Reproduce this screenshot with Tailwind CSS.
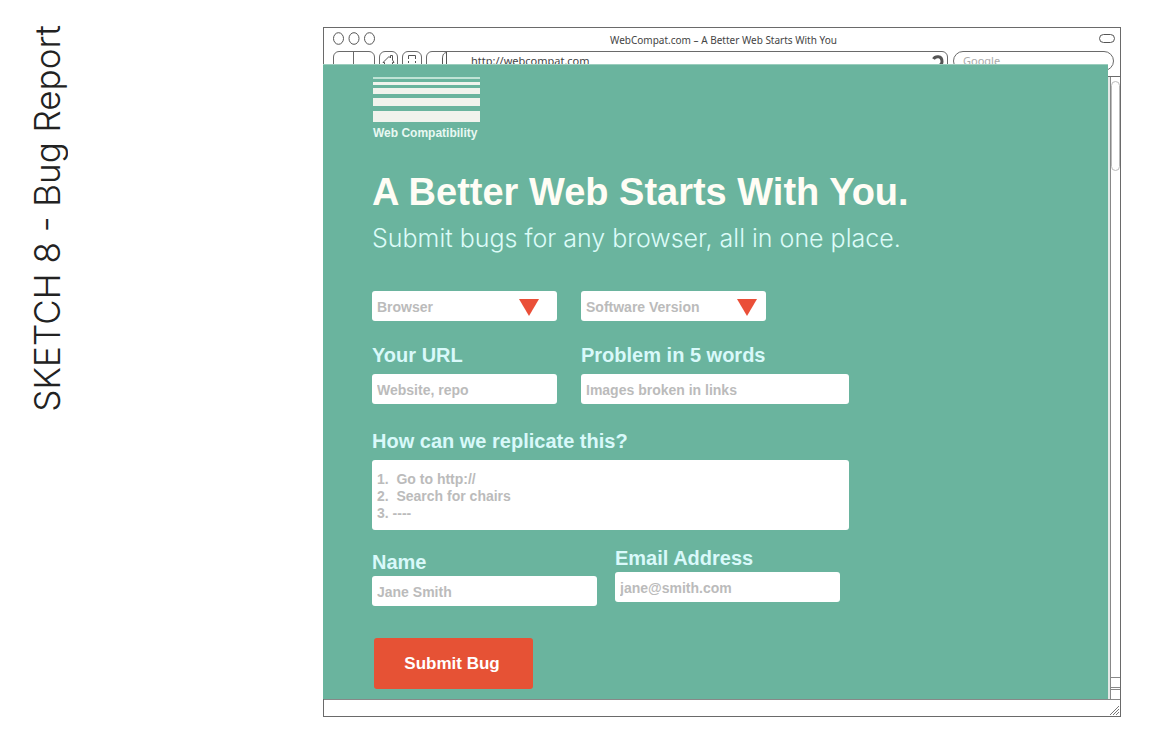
<!DOCTYPE html>
<html lang="en">
<head>
<meta charset="utf-8">
<title>WebCompat.com – A Better Web Starts With You</title>
<script src="https://cdn.jsdelivr.net/npm/@tailwindcss/browser@4"></script>
</head>
<body class="bg-white font-['Liberation_Sans',Arial,sans-serif]">
<div class="flex items-start">
  <aside class="w-[323px] shrink-0 pt-[25px] pl-[23px]">
    <p class="rotate-180 [writing-mode:vertical-rl] font-['Inter',sans-serif] text-[35px] leading-[48px] font-light whitespace-nowrap text-[#222]">SKETCH 8 - Bug Report</p>
  </aside>

  <main class="mt-[27px] mr-[29px] min-w-0 flex-1 border border-[#6a6a6a]">
    <!-- Browser chrome -->
    <header class="h-[49px] overflow-hidden border-b border-[#6a6a6a] font-['Noto_Sans',sans-serif] text-[#444]">
      <div class="flex h-[23px] items-center pr-[5px] pb-0.5 pl-[9px]">
        <svg class="h-[14px] w-[44px]" viewBox="0 0 44 14" fill="none" stroke="#555">
          <ellipse cx="5.500" cy="6.500" rx="5" ry="5.800"/><ellipse cx="21" cy="6.500" rx="5" ry="5.800"/><ellipse cx="36.500" cy="6.500" rx="5" ry="5.800"/>
        </svg>
        <h2 class="flex-1 pt-0.5 pr-[29px] text-center text-[10px] leading-4">WebCompat.com – A Better Web Starts With You</h2>
        <button type="button" aria-label="Toggle toolbar" class="h-[9px] w-4 rounded-full border border-[#555]"></button>
      </div>
      <div class="flex items-start pr-[6px] pl-[9px]">
        <div class="mr-1 grid h-[22px] w-[42px] grid-cols-2 rounded-md border border-[#6a6a6a]">
          <button type="button" aria-label="Back" class="border-r border-[#6a6a6a]"></button>
          <button type="button" aria-label="Forward"></button>
        </div>
        <button type="button" aria-label="Home" class="mr-1 flex h-[22px] w-[19px] justify-center rounded-md border border-[#6a6a6a] pt-[3px]">
          <svg class="h-[14px] w-[13px] shrink-0" viewBox="0 0 13 14" fill="none" stroke="#555"><path d="M1 7.500 7 1.500 8.500 3V.5H10.500V5L12 7.500H10.500V13H2.500V7.500Z"/></svg>
        </button>
        <button type="button" aria-label="Bookmarks" class="mr-1 flex h-[22px] w-5 justify-center rounded-md border border-[#6a6a6a] pt-[3px]">
          <svg class="h-[14px] w-[10px]" viewBox="0 0 10 14" fill="none" stroke="#555"><path d="M1.500 4V.5H8.500V4M1.500 6V8M8.500 6V8M1.500 10V13H8.500V10"/></svg>
        </button>
        <div class="flex h-[22px] min-w-0 flex-1 rounded-md border border-[#6a6a6a]">
          <svg class="h-5 w-5 shrink-0" viewBox="0 0 20 20" fill="none" stroke="#555"><path d="M19.500 0V20M19.500 .5C16 1 15.500 4 15.500 7V20"/></svg>
          <input aria-label="Address" value="http://webcompat.com" class="h-5 min-w-0 flex-1 pb-1 pl-6 text-[11px] outline-none">
          <button type="button" aria-label="Reload" class="h-5 w-[18px] shrink-0">
            <svg class="h-5 w-[18px]" viewBox="0 0 18 20" fill="none" stroke="#555" stroke-width="3"><path d="M4.500 7C6 4 13 3 13 9.500 13 13 9.500 15 6 13.500"/></svg>
          </button>
        </div>
        <input aria-label="Search" placeholder="Google" class="ml-[5px] h-[20px] w-[161px] rounded-full border border-[#6a6a6a] pb-0.5 pl-[9px] text-[11px] outline-none placeholder:text-[#aaa]">
      </div>
    </header>

    <div class="-mt-[13px] flex">
      <section class="relative z-10 -ml-px min-w-0 flex-1 border-t border-[#9bcdbd] bg-[#6ab49e] pt-3 pb-[10px] pl-[49px]">
        <div class="ml-px w-[107px]">
          <svg class="block h-[45px] w-[107px]" viewBox="0 0 107 45" fill="#f1f3ed">
            <rect width="107" height="2" fill="#bfe3d5"/><rect y="5" width="107" height="3"/><rect y="11" width="107" height="6"/><rect y="21" width="107" height="8"/><rect y="34" width="107" height="11"/>
          </svg>
          <p class="pt-[3px] text-[12px] leading-4 font-bold whitespace-nowrap text-[#e8f8f2]">Web Compatibility</p>
        </div>

        <h1 class="mt-[29px] text-[38px] leading-[44px] font-bold whitespace-nowrap text-[#fffdf5]">A Better Web Starts With You.</h1>
        <p class="mt-2 font-['Inter',sans-serif] text-[25px] leading-8 font-light whitespace-nowrap text-[#dcfbf8]">Submit bugs for any browser, all in one place.</p>

        <form class="mt-[37px] text-[14px] font-bold text-[#bbb]">
          <div class="flex gap-6">
            <div class="relative w-[185px]">
              <select aria-label="Browser" class="block h-[30px] w-full appearance-none rounded-[3px] bg-white pt-0.5 pl-[5px] outline-none"><option>Browser</option></select>
              <svg class="pointer-events-none absolute top-2 right-[18px] h-[17px] w-5" viewBox="0 0 20 17"><path d="M0 0H20L10 17Z" fill="#ea4f38"/></svg>
            </div>
            <div class="relative w-[185px]">
              <select aria-label="Software Version" class="block h-[30px] w-full appearance-none rounded-[3px] bg-white pt-0.5 pl-[5px] outline-none"><option>Software Version</option></select>
              <svg class="pointer-events-none absolute top-2 right-[9px] h-[17px] w-5" viewBox="0 0 20 17"><path d="M0 0H20L10 17Z" fill="#ea4f38"/></svg>
            </div>
          </div>

          <div class="mt-[22px] flex gap-6">
            <div class="w-[185px]">
              <label for="url" class="block text-[20px] leading-6 text-[#d9f9fa]">Your URL</label>
              <input id="url" placeholder="Website, repo" class="mt-[7px] block h-[30px] w-full rounded-[3px] bg-white pt-0.5 pl-[5px] outline-none placeholder:text-[#bbb]">
            </div>
            <div class="w-[268px]">
              <label for="problem" class="block text-[20px] leading-6 text-[#d9f9fa]">Problem in 5 words</label>
              <input id="problem" placeholder="Images broken in links" class="mt-[7px] block h-[30px] w-full rounded-[3px] bg-white pt-0.5 pl-[5px] outline-none placeholder:text-[#bbb]">
            </div>
          </div>

          <div class="mt-[25px] w-[477px]">
            <label for="steps" class="block text-[20px] leading-6 text-[#d9f9fa]">How can we replicate this?</label>
            <textarea id="steps" class="mt-[7px] block h-[70px] w-full resize-none overflow-hidden rounded-[3px] bg-white pt-[11px] pl-[5px] leading-[17px] outline-none">1.  Go to http://
2.  Search for chairs
3. ----</textarea>
          </div>

          <div class="mt-4 flex items-start gap-[18px]">
            <div class="w-[225px] pt-1">
              <label for="name" class="block text-[20px] leading-6 text-[#d9f9fa]">Name</label>
              <input id="name" placeholder="Jane Smith" class="mt-0.5 block h-[30px] w-full rounded-[3px] bg-white pt-0.5 pl-[5px] outline-none placeholder:text-[#bbb]">
            </div>
            <div class="w-[225px]">
              <label for="email" class="block text-[20px] leading-6 text-[#d9f9fa]">Email Address</label>
              <input id="email" type="email" placeholder="jane@smith.com" class="mt-0.5 block h-[30px] w-full rounded-[3px] bg-white pt-0.5 pl-[5px] outline-none placeholder:text-[#bbb]">
            </div>
          </div>

          <button type="submit" class="mt-8 ml-0.5 block h-[51px] w-[159px] rounded-[3px] bg-[#e65235] pr-[3px] text-[17px] text-white">Submit Bug</button>
        </form>
      </section>

      <!-- Scrollbar -->
      <div class="mt-[13px] flex w-3 flex-col border-l-2 border-[#e4e8e6]">
        <div class="flex flex-1 flex-col border-l border-[#888] pt-1">
          <div class="h-[90px] rounded-full border border-[#bbb]"></div>
          <div class="mt-auto h-[11px] border-y border-[#888]"></div>
          <div class="mt-px h-[10px] border-t border-[#888]"></div>
        </div>
      </div>
    </div>

    <footer class="flex h-[17px] items-end justify-end border-t border-[#888]">
      <svg class="h-[11px] w-[10px]" viewBox="0 0 10 11" stroke="#777"><path d="M0 10 9 1M3 10 9 4M6 10 9 7"/></svg>
    </footer>
  </main>
</div>
</body>
</html>
